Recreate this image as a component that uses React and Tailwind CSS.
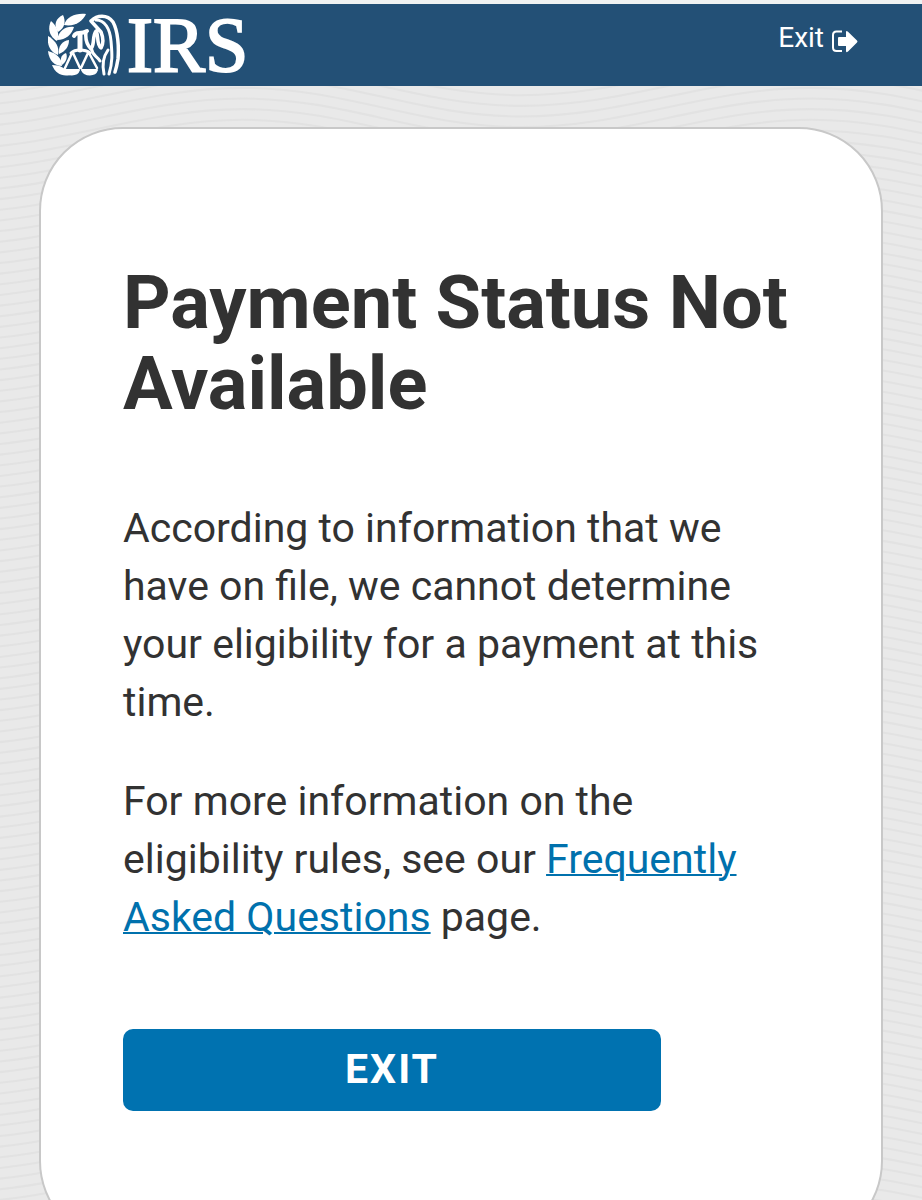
const WAVE_COUNT = 128;

function Backdrop() {
  const waves = Array.from({ length: WAVE_COUNT }, (_, i) => i * 10.3 - 60);
  return (
    <svg
      aria-hidden="true"
      className="absolute inset-0 h-full w-full"
      viewBox="0 0 922 1160"
      preserveAspectRatio="xMidYMin slice"
      fill="none"
      stroke="#e2e2e2"
      strokeWidth="2"
    >
      {waves.map((y) => (
        <path
          key={y}
          d={`M-30 ${y + 38}C70 ${y + 38} 150 ${y} 250 ${y}S420 ${y + 38} 520 ${y + 38}S700 ${y} 800 ${y}S970 ${y + 38} 1070 ${y + 38}`}
        />
      ))}
    </svg>
  );
}

function Emblem() {
  return (
    <svg aria-hidden="true" className="h-[66px] w-[72px]" viewBox="0 0 72 66" fill="none">
      <g fill="#fff">
        <path d="M38 2C28 1 19 4 16 13C27 15 35 9 38 2Z" />
        <path d="M15 3C8 6 5 13 10 20C17 16 18 9 15 3Z" />
        <path d="M3 9C-1 17 2 25 9 29C12 22 9 14 3 9Z" />
        <path d="M26 15C18 14 11 18 9 28C18 28 24 22 26 15Z" />
        <path d="M0 24C-1 33 2 40 10 43C12 35 7 28 0 24Z" />
        <path d="M21 28C14 29 10 34 11 42C18 39 21 34 21 28Z" />
        <path d="M0 39C1 49 7 54 14 54C14 46 8 41 0 39Z" />
        <path d="M18 41C12 43 12 49 14 53C18 50 20 45 18 41Z" />
        <path d="M4 53C7 61 14 65 22 63C18 56 12 53 4 53Z" />
      </g>
      <g stroke="#fff" strokeLinecap="round" strokeLinejoin="round">
        <path d="M26 24C28 19 32 23 39 19" strokeWidth="4" />
        <path d="M32 23V38" strokeWidth="5" />
        <path d="M23 41C27 37 37 37 42 41" strokeWidth="3" />
        <path d="M24 41L17 56M25 41L32 56M40 41L33 56M41 41L49 56" strokeWidth="2.500" />
        <path d="M16 58H31C29 64 19 64 16 58ZM34 58H49C47 64 37 64 34 58Z" fill="#fff" strokeWidth="2" />
        <path d="M38 20C37 28 39 33 43 37C47 32 44 24 48 19C51 23 48 32 53 36C56 31 55 25 53 20L43 9C49 3 59 2 65 10C70 19 71 35 70 47C69 53 68 57 67 60" strokeWidth="3.500" />
        <path d="M48 8C57 8 62 17 63 29C64 41 65 49 61 62" strokeWidth="3" />
        <path d="M60 38C55 45 54 53 56 62" strokeWidth="3" />
        <path d="M44 38C44 43 49 44 52 49" strokeWidth="3" />
      </g>
    </svg>
  );
}

function ExitIcon() {
  return (
    <svg aria-hidden="true" className="h-[24px] w-[28px]" viewBox="0 0 28 24" fill="none">
      <path d="M11 1.500H5.500Q2 1.500 2 5V17.500Q2 21 5.500 21H11" stroke="#fff" strokeWidth="2" />
      <path d="M7 8Q7 7 8 7H15V2.500Q15 0 17 1.800L26 10.500Q27 11.500 26 12.500L17 21.500Q15 23 15 21V16H8Q7 16 7 15Z" fill="#fff" />
    </svg>
  );
}

export default function App() {
  return (
    <div className="min-h-screen bg-[#e9e9e9] font-[Roboto,sans-serif] text-[#323232]">
      <header className="flex items-start justify-between border-t-4 border-[#f0f2f2] bg-[#235076] pr-[63px] pl-12 text-white">
        <a href="#home" aria-label="IRS home" className="flex h-[82px] items-center gap-[7px]">
          <Emblem />
          <span className="font-['Liberation_Serif',serif] text-[78px] leading-[82px] [-webkit-text-stroke:2px_white]">IRS</span>
        </a>
        <a href="#exit" className="flex items-center gap-[7px] pt-4 text-[28px] leading-9">
          Exit
          <span className="pt-2"><ExitIcon /></span>
        </a>
      </header>
      <main className="relative overflow-hidden px-[39px] pt-[41px] pb-10">
        <Backdrop />
        <section className="relative rounded-[84px] border-2 border-[#c8c8c8] bg-white px-[82px] pt-[133px] pb-[132px]">
          <h1 className="text-[74px] leading-[81px] font-bold">Payment Status Not Available</h1>
          <p className="mt-[75px] text-[41px] leading-[58px]">
            According to information that we have on file, we cannot determine your eligibility for a payment at this time.
          </p>
          <p className="mt-[41px] text-[41px] leading-[58px]">
            For more information on the eligibility rules, see our{" "}
            <a href="#faq" className="text-[#0071ad] underline decoration-2">Frequently Asked Questions</a> page.
          </p>
          <button type="button" className="mt-[83px] h-[82px] w-full max-w-[538px] rounded-[10px] bg-[#0072b0] text-[41px] font-bold tracking-[2px] text-white">
            EXIT
          </button>
        </section>
      </main>
    </div>
  );
}
